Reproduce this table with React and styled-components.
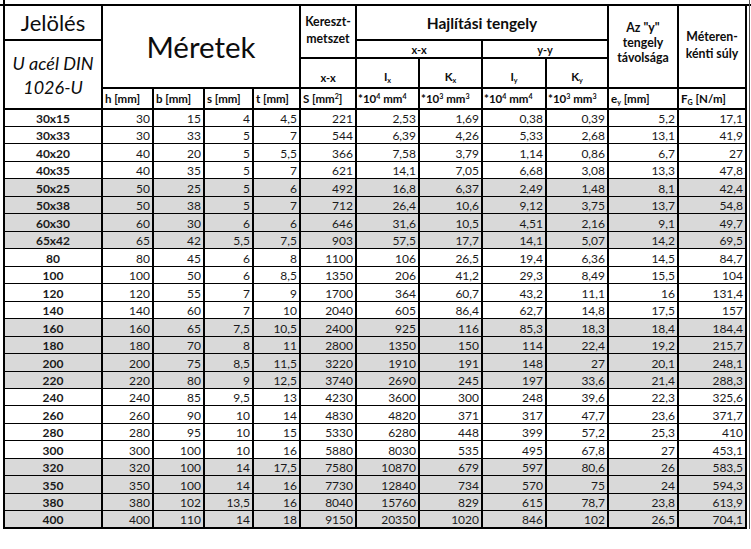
import React from "react";
import styled, { createGlobalStyle } from "styled-components";

const Global = createGlobalStyle`
  html, body { margin: 0; padding: 0; background: #fff; }
  body { font-family: Lato, "Open Sans", "Liberation Sans", sans-serif; color: #111; }
`;

const Page = styled.div`
  display: flex;
  width: 751px;
  height: 549px;
  overflow: hidden;
`;

const Sheet = styled.div`
  display: flex;
  flex-direction: column;
  width: 748px;
`;

const TopStrip = styled.div`
  height: 4px;
  margin-left: 3px;
  border-left: 2px solid #000;
`;

const TopRule = styled.div`
  height: 2px;
  background: #000;
  width: 751px;
`;

const RightEdge = styled.div`
  width: 1px;
  height: 529px;
  margin-left: 1px;
  background: #555;
`;

const Table = styled.table`
  margin-left: 3px;
  border-collapse: collapse;
  table-layout: fixed;
  width: 743px;
`;

const HRow = styled.tr`
  height: ${(p) => p.$h}px;
`;

const HCell = styled.th`
  border: 2px solid #000;
  border-top: ${(p) => (p.$first ? "none" : "2px solid #000")};
  padding: ${(p) => p.$pad || "0 2px"};
  font-size: ${(p) => p.$size || 11.5}px;
  font-weight: ${(p) => (p.$light ? 400 : 700)};
  font-style: ${(p) => (p.$italic ? "italic" : "normal")};
  line-height: ${(p) => p.$lh || 15}px;
  text-align: ${(p) => p.$align || "center"};
  vertical-align: ${(p) => p.$valign || "middle"};
  white-space: nowrap;
  color: #0d0d0d;
  overflow: hidden;
`;

const DRow = styled.tr`
  height: 17.48px;
  background: ${(p) => (p.$shade ? "#d9d9d9" : "#fff")};
`;

const DCell = styled.td`
  border-left: 2px solid #000;
  border-right: 2px solid #000;
  border-top: 1px solid #000;
  border-bottom: ${(p) => (p.$last ? "2px" : "1px")} solid #000;
  padding: 0 2px 0 2px;
  font-size: 12px;
  line-height: 15px;
  font-weight: ${(p) => (p.$bold ? 700 : 400)};
  text-align: ${(p) => (p.$bold ? "center" : "right")};
  vertical-align: bottom;
  white-space: nowrap;
  color: #1a1a1a;
`;

const Sup = styled.sup`
  font-size: 0.62em;
  vertical-align: baseline;
  position: relative;
  top: -0.5em;
  line-height: 0;
`;

const Sub = styled.sub`
  font-size: 0.62em;
  vertical-align: baseline;
  position: relative;
  top: 0.25em;
  line-height: 0;
`;

const widths = [98, 51, 51, 49, 47, 56, 63, 63, 64, 62, 70, 68];

const rows = [
  ["30x15", "30", "15", "4", "4,5", "221", "2,53", "1,69", "0,38", "0,39", "5,2", "17,1"],
  ["30x33", "30", "33", "5", "7", "544", "6,39", "4,26", "5,33", "2,68", "13,1", "41,9"],
  ["40x20", "40", "20", "5", "5,5", "366", "7,58", "3,79", "1,14", "0,86", "6,7", "27"],
  ["40x35", "40", "35", "5", "7", "621", "14,1", "7,05", "6,68", "3,08", "13,3", "47,8"],
  ["50x25", "50", "25", "5", "6", "492", "16,8", "6,37", "2,49", "1,48", "8,1", "42,4"],
  ["50x38", "50", "38", "5", "7", "712", "26,4", "10,6", "9,12", "3,75", "13,7", "54,8"],
  ["60x30", "60", "30", "6", "6", "646", "31,6", "10,5", "4,51", "2,16", "9,1", "49,7"],
  ["65x42", "65", "42", "5,5", "7,5", "903", "57,5", "17,7", "14,1", "5,07", "14,2", "69,5"],
  ["80", "80", "45", "6", "8", "1100", "106", "26,5", "19,4", "6,36", "14,5", "84,7"],
  ["100", "100", "50", "6", "8,5", "1350", "206", "41,2", "29,3", "8,49", "15,5", "104"],
  ["120", "120", "55", "7", "9", "1700", "364", "60,7", "43,2", "11,1", "16", "131,4"],
  ["140", "140", "60", "7", "10", "2040", "605", "86,4", "62,7", "14,8", "17,5", "157"],
  ["160", "160", "65", "7,5", "10,5", "2400", "925", "116", "85,3", "18,3", "18,4", "184,4"],
  ["180", "180", "70", "8", "11", "2800", "1350", "150", "114", "22,4", "19,2", "215,7"],
  ["200", "200", "75", "8,5", "11,5", "3220", "1910", "191", "148", "27", "20,1", "248,1"],
  ["220", "220", "80", "9", "12,5", "3740", "2690", "245", "197", "33,6", "21,4", "288,3"],
  ["240", "240", "85", "9,5", "13", "4230", "3600", "300", "248", "39,6", "22,3", "325,6"],
  ["260", "260", "90", "10", "14", "4830", "4820", "371", "317", "47,7", "23,6", "371,7"],
  ["280", "280", "95", "10", "15", "5330", "6280", "448", "399", "57,2", "25,3", "410"],
  ["300", "300", "100", "10", "16", "5880", "8030", "535", "495", "67,8", "27", "453,1"],
  ["320", "320", "100", "14", "17,5", "7580", "10870", "679", "597", "80,6", "26", "583,5"],
  ["350", "350", "100", "14", "16", "7730", "12840", "734", "570", "75", "24", "594,3"],
  ["380", "380", "102", "13,5", "16", "8040", "15760", "829", "615", "78,7", "23,8", "613,9"],
  ["400", "400", "110", "14", "18", "9150", "20350", "1020", "846", "102", "26,5", "704,1"],
];

const shaded = (i) => (i >= 4 && i <= 7) || (i >= 12 && i <= 15) || (i >= 20 && i <= 23);

const Pow = ({ exp }) => (
  <>
    *10<Sup>{exp}</Sup> mm<Sup>{exp}</Sup>
  </>
);

export default function App() {
  return (
    <>
      <Global />
      <Page>
        <Sheet>
          <TopStrip />
          <TopRule />
          <Table>
            <colgroup>
              {widths.map((w, i) => (
                <col key={i} style={{ width: w }} />
              ))}
            </colgroup>
            <thead>
              <HRow $h={34}>
                <HCell $first $light $size={22} $lh={26}>Jelölés</HCell>
                <HCell $first $light colSpan={4} rowSpan={3} $size={29.5} $lh={32}>
                  Méretek
                </HCell>
                <HCell $first rowSpan={2} $size={12.3} $lh={17} $pad="0 2px 3px">
                  Kereszt-
                  <br />
                  metszet
                </HCell>
                <HCell $first colSpan={4} $size={15.5} $lh={20}>
                  Hajlítási tengely
                </HCell>
                <HCell $first rowSpan={3} $size={12.3} $lh={15} $pad="0 2px 8px">
                  Az "y"
                  <br />
                  tengely
                  <br />
                  távolsága
                </HCell>
                <HCell $first rowSpan={3} $size={12.3} $lh={17} $pad="0 2px 3px">
                  Méteren-
                  <br />
                  kénti súly
                </HCell>
              </HRow>
              <HRow $h={18}>
                <HCell rowSpan={3} $light $italic $size={18} $lh={24}>
                  U acél DIN
                  <br />
                  1026-U
                </HCell>
                <HCell colSpan={2} $size={11}>x-x</HCell>
                <HCell colSpan={2} $size={11}>y-y</HCell>
              </HRow>
              <HRow $h={30}>
                <HCell $size={11} $valign="bottom" $pad="0 2px 2px">x-x</HCell>
                <HCell $size={11.5} $valign="bottom" $pad="0 2px 3px">
                  I<Sub>x</Sub>
                </HCell>
                <HCell $size={11.5} $valign="bottom" $pad="0 2px 3px">
                  K<Sub>x</Sub>
                </HCell>
                <HCell $size={11.5} $valign="bottom" $pad="0 2px 3px">
                  I<Sub>y</Sub>
                </HCell>
                <HCell $size={11.5} $valign="bottom" $pad="0 2px 3px">
                  K<Sub>y</Sub>
                </HCell>
              </HRow>
              <HRow $h={21}>
                <HCell $align="left" $size={11.5}>h [mm]</HCell>
                <HCell $align="left" $size={11.5}>b [mm]</HCell>
                <HCell $align="left" $size={11.5}>s [mm]</HCell>
                <HCell $align="left" $size={11.5}>t [mm]</HCell>
                <HCell $align="left" $size={11.5}>
                  S [mm<Sup>2</Sup>]
                </HCell>
                <HCell $align="left" $size={11.5} $pad="0 1px">
                  <Pow exp="4" />
                </HCell>
                <HCell $align="left" $size={11.5} $pad="0 1px">
                  <Pow exp="3" />
                </HCell>
                <HCell $align="left" $size={11.5} $pad="0 1px">
                  <Pow exp="4" />
                </HCell>
                <HCell $align="left" $size={11.5} $pad="0 1px">
                  <Pow exp="3" />
                </HCell>
                <HCell $align="left" $size={11.5}>
                  e<Sub>y</Sub> [mm]
                </HCell>
                <HCell $align="left" $size={11.5}>
                  F<Sub>G</Sub> [N/m]
                </HCell>
              </HRow>
            </thead>
            <tbody>
              {rows.map((r, i) => (
                <DRow key={r[0]} $shade={shaded(i)}>
                  {r.map((v, j) => (
                    <DCell key={j} $bold={j === 0} $last={i === rows.length - 1}>
                      {v}
                    </DCell>
                  ))}
                </DRow>
              ))}
            </tbody>
          </Table>
        </Sheet>
        <RightEdge />
      </Page>
    </>
  );
}
